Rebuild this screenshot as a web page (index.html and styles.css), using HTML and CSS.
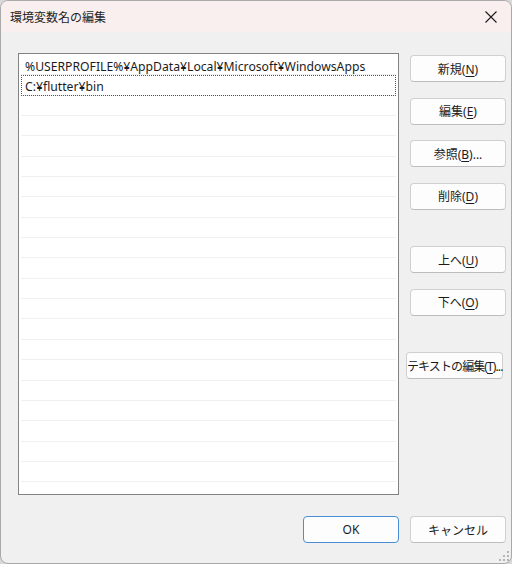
FILE: index.html
```html
<!DOCTYPE html>
<html lang="ja">
<head>
  <meta charset="UTF-8" />
  <title>環境変数名の編集</title>
  <link rel="stylesheet" href="styles.css">
</head>
<body>
  <div class="window">
    <div class="titlebar">
      <span class="title">環境変数名の編集</span>
      <span class="close">
        <svg width="12" height="12" viewBox="0 0 12 12"><path d="M0.5 0.5 L11.5 11.5 M11.5 0.5 L0.5 11.5" stroke="#1c1c1c" stroke-width="1.1" fill="none"/></svg>
      </span>
    </div>

    <div class="content">
      <div class="listbox">
        <div class="row">%USERPROFILE%¥AppData¥Local¥Microsoft¥WindowsApps</div>
        <div class="row focused">C:¥flutter¥bin</div>
        <div class="row"></div><div class="row"></div><div class="row"></div><div class="row"></div>
        <div class="row"></div><div class="row"></div><div class="row"></div><div class="row"></div>
        <div class="row"></div><div class="row"></div><div class="row"></div><div class="row"></div>
        <div class="row"></div><div class="row"></div><div class="row"></div><div class="row"></div>
        <div class="row"></div><div class="row"></div><div class="row"></div>
      </div>

      <div class="side">
        <button class="btn">新規(<u>N</u>)</button>
        <button class="btn">編集(<u>E</u>)</button>
        <button class="btn">参照(<u>B</u>)...</button>
        <button class="btn">削除(<u>D</u>)</button>
        <button class="btn group">上へ(<u>U</u>)</button>
        <button class="btn">下へ(<u>O</u>)</button>
        <button class="btn group wide">テキストの編集(<u>T</u>)...</button>
      </div>
    </div>

    <div class="footer">
      <button class="btn default">OK</button>
      <button class="btn">キャンセル</button>
    </div>

    <svg class="grip" width="11" height="11" viewBox="0 0 11 11">
      <rect x="8" y="0" width="2" height="2" fill="#b4b4b4"/>
      <rect x="4" y="4" width="2" height="2" fill="#b4b4b4"/>
      <rect x="8" y="4" width="2" height="2" fill="#b4b4b4"/>
      <rect x="0" y="8" width="2" height="2" fill="#b4b4b4"/>
      <rect x="4" y="8" width="2" height="2" fill="#b4b4b4"/>
      <rect x="8" y="8" width="2" height="2" fill="#b4b4b4"/>
    </svg>
  </div>
</body>
</html>
```

FILE: styles.css
```css
html, body {
  margin: 0;
  background: #d9d9d9;
}
body {
  font-family: "Noto Sans", "Noto Sans CJK JP", sans-serif;
  font-size: 12px;
  color: #1b1b1b;
}

.window {
  position: relative;
  width: 512px;
  height: 564px;
  box-sizing: border-box;
  border: 1px solid #a9a9a9;
  border-radius: 8px;
  background: #f0f0f0;
  overflow: hidden;
  display: flex;
  flex-direction: column;
}

.titlebar {
  height: 31px;
  flex: none;
  display: flex;
  align-items: center;
  justify-content: space-between;
  padding: 0 14px 0 9px;
  background: #f9efee;
}
.title {
  font-family: "Noto Sans CJK JP", sans-serif;
  font-size: 12px;
  color: #1f1f1f;
}
.close {
  display: flex;
  margin-top: 1px;
}

.content {
  display: flex;
  padding: 21px 0 0 17px;
}

.listbox {
  width: 381px;
  height: 442px;
  box-sizing: border-box;
  border: 1px solid #838383;
  background: #fff;
  padding: 1px 2px 0 2px;
  overflow: hidden;
}
.row {
  height: 20.35px;
  box-sizing: border-box;
  border-bottom: 1px solid #f0f0f0;
  padding: 2px 0 0 4px;
  font-size: 12.2px;
  line-height: 19px;
  white-space: nowrap;
}
.row.focused {
  outline: 1px dotted #555;
  outline-offset: -1px;
}

.side {
  display: flex;
  flex-direction: column;
  gap: 15.5px;
  margin-left: 11px;
  padding-top: 2px;
}

.btn {
  width: 96px;
  height: 27px;
  box-sizing: border-box;
  border: 1px solid #d0d0d0;
  border-bottom-color: #bdbdbd;
  border-radius: 4px;
  background: #fdfdfd;
  font-family: "Noto Sans", "Noto Sans CJK JP", sans-serif;
  font-size: 12px;
  color: #1b1b1b;
  padding: 0;
  white-space: nowrap;
}
.btn u {
  text-underline-offset: 2px;
}
.btn.group {
  margin-top: 21px;
}
.btn.wide {
  width: 97px;
  margin-left: -4px;
  letter-spacing: -0.9px;
}
.btn.default {
  border: 1px solid #4a8fd6;
}

.footer {
  display: flex;
  justify-content: flex-end;
  gap: 11px;
  padding: 21px 5px 0 0;
}

.grip {
  position: absolute;
  right: 1px;
  bottom: 1px;
}
```
